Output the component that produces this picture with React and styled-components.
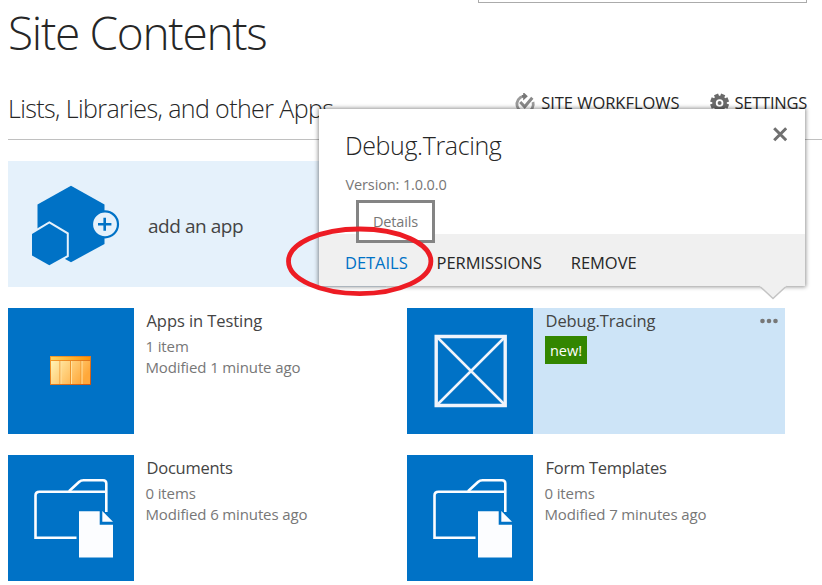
import React from "react";
import styled, { createGlobalStyle } from "styled-components";

const BLUE = "#0072c6";

const GlobalStyle = createGlobalStyle`
  * { box-sizing: border-box; }
  body {
    margin: 0;
    background: #fff;
    font-family: "Open Sans", "Noto Sans", sans-serif;
    color: #444;
    overflow: hidden;
  }
  h1, h2, h3, p { margin: 0; font-weight: 400; }
  svg { display: block; flex: none; }
`;

const Page = styled.div`
  position: relative;
  width: 822px;
  height: 585px;
  padding-left: 8px;
  overflow: hidden;
`;

const SearchBox = styled.div`
  width: 329px;
  height: 3px;
  margin-left: 470px;
  border: 1px solid #ababab;
  border-top: 0;
`;

const PageTitle = styled.h1`
  height: 57px;
  padding-top: 1px;
  font-size: 46px;
  font-weight: 300;
  line-height: 57px;
  letter-spacing: -1.3px;
  color: #262626;
`;

const SectionBar = styled.div`
  display: flex;
  align-items: flex-start;
  justify-content: space-between;
  height: 80px;
  padding: 28px 15px 0 0;
  border-bottom: 1px solid #c0c0c0;
`;

const SectionTitle = styled.h2`
  font-size: 25px;
  font-weight: 300;
  line-height: 40px;
  letter-spacing: -0.6px;
  color: #262626;
`;

const Actions = styled.div`
  display: flex;
  gap: 30px;
  padding-top: 5px;
`;

const Action = styled.div`
  display: flex;
  align-items: flex-start;
  gap: 5px;
  font-size: 16.5px;
  line-height: 20px;
  letter-spacing: ${(p) => p.$tracking}px;
  color: #262626;
  white-space: nowrap;
`;

const Tiles = styled.div`
  display: grid;
  grid-template-columns: 378px 378px;
  gap: 21px;
  padding-top: 21px;
`;

const AddTile = styled.div`
  grid-column: 1 / -1;
  display: flex;
  align-items: center;
  width: 378px;
  height: 126px;
  background: #e5f1fb;
`;

const AddLabel = styled.span`
  font-size: 19px;
  line-height: 28px;
  letter-spacing: -0.45px;
  margin-left: 14px;
  padding-top: 4px;
`;

const Tile = styled.div`
  display: flex;
  height: 126px;
  background: ${(p) => (p.$active ? "#cde4f7" : "transparent")};
`;

const TileIcon = styled.div`
  flex: none;
  width: 126px;
  height: 126px;
  background: ${BLUE};
`;

const TileBody = styled.div`
  flex: 1;
  padding: 2px 7px 0 12px;
`;

const TileHead = styled.div`
  display: flex;
  justify-content: space-between;
  height: 22px;
`;

const TileTitle = styled.h3`
  font-size: 16.5px;
  line-height: 22px;
  letter-spacing: ${(p) => p.$tracking}px;
  margin-left: 0.5px;
`;

const Meta = styled.div`
  margin: 4px 0 0 -0.5px;
  font-size: 15px;
  line-height: 21px;
  letter-spacing: -0.13px;
  color: #777;
`;

const NewBadge = styled.span`
  display: block;
  width: 42px;
  height: 28px;
  margin-top: 4px;
  background: #338600;
  color: #fff;
  font-size: 14.5px;
  line-height: 29px;
  text-align: center;
`;

const Callout = styled.div`
  position: absolute;
  left: 319px;
  top: 109px;
  width: 486px;
  height: 177px;
  display: flex;
  flex-direction: column;
  background: #fff;
  box-shadow: 0 0 4px 1px rgba(0, 0, 0, 0.42);
`;

const CalloutBody = styled.div`
  flex: 1;
  display: flex;
  justify-content: space-between;
  padding: 16px 18px 0 26px;
`;

const CalloutTitle = styled.h2`
  font-size: 25px;
  font-weight: 300;
  line-height: 40px;
  letter-spacing: -0.38px;
  color: #262626;
`;

const Version = styled.p`
  margin: 9px 0 0 0.5px;
  font-size: 14.5px;
  line-height: 21px;
  letter-spacing: -0.12px;
  color: #777;
`;

const CalloutFooter = styled.div`
  display: flex;
  align-items: center;
  height: 52px;
  padding: 5px 0 0 26px;
  background: #f0f0f0;
`;

const Command = styled.span`
  width: ${(p) => p.$width}px;
  font-size: 16.5px;
  line-height: 22px;
  letter-spacing: -0.04px;
  color: ${(p) => (p.$hot ? BLUE : "#262626")};
`;

const CalloutArrow = styled.svg`
  position: absolute;
  left: 438px;
  top: 176px;
`;

const Tooltip = styled.div`
  position: absolute;
  left: 356px;
  top: 200px;
  width: 79px;
  height: 43px;
  border: 3px solid #848484;
  background: #fff;
  font-size: 14.5px;
  line-height: 37px;
  letter-spacing: -0.15px;
  text-align: center;
  color: #777;
`;

const Marker = styled.svg`
  position: absolute;
  left: 280px;
  top: 220px;
`;

const WorkflowIcon = () => (
  <svg width="22" height="24" viewBox="0 0 22 24" fill="none">
    <path d="M9.5 3.2A8.2 8.2 0 1 0 19 9" stroke="#9a9a9a" strokeWidth="2.8" />
    <path d="M8 3.2h3" stroke="#777" strokeWidth="2.4" />
    <path d="M9.2 -1l4.6 4.2L9.2 7.4z" fill="#777" />
    <path d="M6.2 9l4.5 4.8L18.3 4.8" stroke="#888" strokeWidth="3" />
  </svg>
);

const GearIcon = () => (
  <svg width="20" height="20" viewBox="0 0 20 20">
    <g fill="#6a6a6a" transform="translate(9.6 10)">
      <circle r="7.3" />
      {[0, 45, 90, 135, 180, 225, 270, 315].map((a) => (
        <rect key={a} x="-2.2" y="-9.4" width="4.4" height="5" transform={`rotate(${a + 22.5})`} />
      ))}
      <circle r="3.8" fill="#fff" />
      <circle r="2" />
    </g>
  </svg>
);

const AddAppIcon = () => (
  <svg width="126" height="126" viewBox="0 0 126 126">
    <path d="M63 24.7L96.5 43.5V83L63 101.2L29.5 83V43.5z" fill={BLUE} />
    <path
      d="M41.3 62.5L58.8 73V94.5L41.3 104.3L24 94.5V73z"
      fill={BLUE}
      stroke="#e5f1fb"
      strokeWidth="4"
      paintOrder="stroke"
    />
    <circle cx="97" cy="63.3" r="13" fill="#e5f1fb" stroke={BLUE} strokeWidth="2.2" />
    <path d="M90 63.3h13.4M96.7 56.8v13" stroke={BLUE} strokeWidth="2.6" />
  </svg>
);

const ListIcon = () => (
  <svg width="126" height="126" viewBox="0 0 126 126">
    <defs>
      <linearGradient id="cell" x1="0" y1="0" x2="1" y2="0.4">
        <stop offset="0" stopColor="#fff3b5" />
        <stop offset="1" stopColor="#ffa83a" />
      </linearGradient>
      <linearGradient id="edge" x1="0" y1="0" x2="1" y2="1">
        <stop offset="0" stopColor="#f7a02c" />
        <stop offset="1" stopColor="#cf5411" />
      </linearGradient>
      <linearGradient id="head" x1="0" y1="0" x2="1" y2="0">
        <stop offset="0" stopColor="#ffd45e" />
        <stop offset="1" stopColor="#ff9200" />
      </linearGradient>
    </defs>
    <rect x="42" y="48" width="41" height="29" fill="url(#edge)" />
    <rect x="43" y="49" width="39" height="3" fill="url(#head)" />
    <rect x="43" y="53" width="39" height="23" fill="url(#cell)" />
    <path d="M52 53v23M62.5 53v23M73 53v23" stroke="#ee942b" strokeWidth="1" />
    <path d="M53 53v23M63.5 53v23M74 53v23" stroke="#ffe0a0" strokeWidth="1" />
  </svg>
);

const AppIcon = () => (
  <svg width="126" height="126" viewBox="0 0 126 126" fill="none" stroke="#f0f4fb">
    <path d="M29.2 28.5h69v69h-69z" strokeWidth="3.4" />
    <path d="M30 29L98 97M98 29L30 97" strokeWidth="2.5" />
  </svg>
);

const LibraryIcon = () => (
  <svg width="126" height="126" viewBox="0 0 126 126">
    <g fill="none" stroke="#fcfdff" strokeWidth="2.6">
      <path d="M68.5 82.7H27.5V40.5Q27.5 36.7 31.5 36.7H98" />
      <path d="M61 36.2L71 27Q73 25.2 75.5 25.2H95Q98.3 25.2 98.3 28.5V57" />
    </g>
    <path d="M71 56.3H91.7V69.7H105V102.5H71z" fill="#fcfdff" />
    <path d="M94.3 56L105 66.8H94.3z" fill="#fcfdff" />
  </svg>
);

const MoreIcon = () => (
  <svg width="18" height="22" viewBox="0 0 18 22" fill="#777">
    <circle cx="2.5" cy="11" r="2.3" />
    <circle cx="9" cy="11" r="2.3" />
    <circle cx="15.5" cy="11" r="2.3" />
  </svg>
);

const CloseIcon = () => (
  <svg width="14" height="18" viewBox="0 0 14 18" stroke="#707070" strokeWidth="3">
    <path d="M1.2 3.2l12 12M13.2 3.2l-12 12" />
  </svg>
);

const items = [
  { title: "Apps in Testing", tracking: -0.07, icon: ListIcon, meta: ["1 item", "Modified 1 minute ago"] },
  { title: "Debug.Tracing", tracking: -0.07, icon: AppIcon, isNew: true },
  { title: "Documents", tracking: -0.25, icon: LibraryIcon, meta: ["0 items", "Modified 6 minutes ago"] },
  { title: "Form Templates", tracking: -0.27, icon: LibraryIcon, meta: ["0 items", "Modified 7 minutes ago"] },
];

export default function App() {
  return (
    <Page>
      <GlobalStyle />
      <SearchBox />
      <PageTitle>Site Contents</PageTitle>
      <SectionBar>
        <SectionTitle>Lists, Libraries, and other Apps</SectionTitle>
        <Actions>
          <Action $tracking={-0.03}>
            <WorkflowIcon />
            SITE WORKFLOWS
          </Action>
          <Action $tracking={-0.25}>
            <GearIcon />
            SETTINGS
          </Action>
        </Actions>
      </SectionBar>
      <Tiles>
        <AddTile>
          <AddAppIcon />
          <AddLabel>add an app</AddLabel>
        </AddTile>
        {items.map(({ title, tracking, icon: Icon, meta, isNew }) => (
          <Tile key={title} $active={isNew}>
            <TileIcon>
              <Icon />
            </TileIcon>
            <TileBody>
              <TileHead>
                <TileTitle $tracking={tracking}>{title}</TileTitle>
                {isNew && <MoreIcon />}
              </TileHead>
              {isNew && <NewBadge>new!</NewBadge>}
              {meta && (
                <Meta>
                  {meta.map((line) => (
                    <p key={line}>{line}</p>
                  ))}
                </Meta>
              )}
            </TileBody>
          </Tile>
        ))}
      </Tiles>
      <Callout>
        <CalloutBody>
          <div>
            <CalloutTitle>Debug.Tracing</CalloutTitle>
            <Version>Version: 1.0.0.0</Version>
          </div>
          <CloseIcon />
        </CalloutBody>
        <CalloutFooter>
          <Command $hot $width={91.5}>DETAILS</Command>
          <Command $width={134.3}>PERMISSIONS</Command>
          <Command $width={80}>REMOVE</Command>
        </CalloutFooter>
        <CalloutArrow width="32" height="16" viewBox="0 0 32 16">
          <path d="M2.5 1L16 13.5L29.5 1" fill="#f0f0f0" stroke="#c4c4c4" strokeWidth="1.5" />
          <path d="M3 0H29V1.5H3z" fill="#f0f0f0" />
        </CalloutArrow>
      </Callout>
      <Tooltip>Details</Tooltip>
      <Marker width="160" height="84" viewBox="0 0 160 84">
        <ellipse cx="79.7" cy="41.3" rx="71.2" ry="32.3" fill="none" stroke="#ed1c24" strokeWidth="4.8" />
      </Marker>
    </Page>
  );
}
